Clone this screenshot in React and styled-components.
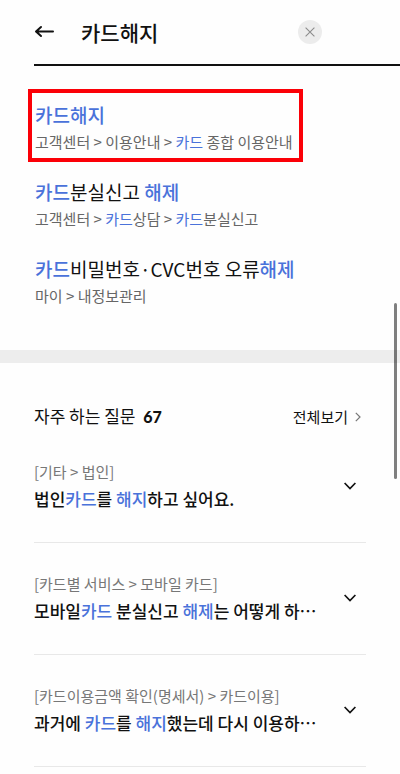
import React, { useState } from 'react'
import styled, { createGlobalStyle } from 'styled-components'

const menus = [
    { title: '*카드해지*', path: '고객센터 > 이용안내 > *카드* 종합 이용안내', marked: true },
    { title: '*카드*분실신고 *해제*', path: '고객센터 > *카드*상담 > *카드*분실신고' },
    { title: '*카드*비밀번호·CVC번호 오류*해제*', path: '마이 > 내정보관리' },
]

const questions = [
    { category: '[기타 > 법인]', title: '법인*카드*를 *해지*하고 싶어요.' },
    { category: '[카드별 서비스 > 모바일 카드]', title: '모바일*카드* 분실신고 *해제*는 어떻게 하⋯' },
    { category: '[카드이용금액 확인(명세서) > 카드이용]', title: '과거에 *카드*를 *해지*했는데 다시 이용하⋯' },
]

// words between asterisks are the matched keywords
function Keywords({ text }) {
    return text.split('*').map((part, index) => (
        index % 2 ? <Keyword key={index}>{part}</Keyword> : part
    ))
}

export default function App() {
    const [query, setQuery] = useState('카드해지')

    return <>
        <GlobalStyle />
        <SearchBar role="search" onSubmit={(e) => e.preventDefault()}>
            <BackButton type="button" aria-label="뒤로">
                <svg width="20" height="14" viewBox="0 0 20 14" fill="none" stroke="#111" strokeWidth="2" strokeLinecap="round" strokeLinejoin="round">
                    <path d="M19 6.5H2.5M7 2L2 6.5L7 11" />
                </svg>
            </BackButton>
            <SearchInput aria-label="검색어" value={query} onChange={(e) => setQuery(e.target.value)} />
            <ClearButton type="button" aria-label="지우기" onClick={() => setQuery('')}>
                <svg width="10" height="10" viewBox="0 0 10 10" fill="none" stroke="#8c8c8c" strokeWidth="1.1">
                    <path d="M0.6 0.6L9.4 9.4M9.4 0.6L0.6 9.4" />
                </svg>
            </ClearButton>
        </SearchBar>
        <main>
            <MenuList>
                {menus.map((menu) => (
                    <li key={menu.title}>
                        <MenuLink href="#" $marked={menu.marked}>
                            <MenuTitle><Keywords text={menu.title} /></MenuTitle>
                            <MenuPath><Keywords text={menu.path} /></MenuPath>
                        </MenuLink>
                    </li>
                ))}
            </MenuList>
            <Faq>
                <FaqHeader>
                    <FaqTitle>자주 하는 질문 <Count>67</Count></FaqTitle>
                    <MoreLink href="#">
                        전체보기
                        <svg width="6" height="10" viewBox="0 0 6 10" fill="none" stroke="#777" strokeWidth="1.2">
                            <path d="M0.8 0.8L5 5L0.8 9.2" />
                        </svg>
                    </MoreLink>
                </FaqHeader>
                <QuestionList>
                    {questions.map((question) => (
                        <Question key={question.title}>
                            <QuestionButton type="button" aria-expanded="false">
                                <QuestionText>
                                    <Category>{question.category}</Category>
                                    <QuestionTitle><Keywords text={question.title} /></QuestionTitle>
                                </QuestionText>
                                <svg width="12" height="8" viewBox="0 0 12 8" fill="none" stroke="#111" strokeWidth="1.7">
                                    <path d="M0.6 1L6 6.6L11.4 1" />
                                </svg>
                            </QuestionButton>
                        </Question>
                    ))}
                </QuestionList>
            </Faq>
        </main>
        <ScrollThumb />
    </>
}

const GlobalStyle = createGlobalStyle`
    *{
        box-sizing:border-box;
    }
    html{
        scrollbar-width:none;
    }
    body{
        margin:0;
        background-color:#fefefe;
        color:#111;
        font-family:"Noto Sans CJK KR", "Noto Sans", sans-serif;
    }
    button, input{
        padding:0;
        border:none;
        background:none;
        color:inherit;
        font-family:inherit;
    }
    button{
        cursor:pointer;
    }
    a{
        color:inherit;
        text-decoration:none;
    }
    h2, p, ul{
        margin:0;
        padding:0;
    }
    ul{
        list-style:none;
    }
    svg{
        display:block;
        flex:none;
    }
`

const SearchBar = styled.form`
    display:flex;
    align-items:center;
    height:66px;
    margin-left:34px;
    padding-right:78px;
    border-bottom:2px solid #111;
`

const BackButton = styled.button`
    margin-right:27px;
`

const SearchInput = styled.input`
    flex:1;
    min-width:0;
    height:32px;
    font-size:21px;
    font-weight:500;
    outline:none;
`

const ClearButton = styled.button`
    display:flex;
    align-items:center;
    justify-content:center;
    width:24px;
    height:24px;
    border-radius:50%;
    background-color:#ececec;
`

const Keyword = styled.span`
    color:#4a72da;
    font-weight:500;
`

const MenuList = styled.ul`
    display:flex;
    flex-direction:column;
    gap:23px;
    padding:35px 35px 41px;
    border-bottom:13px solid #ededed;
`

const MenuLink = styled.a`
    position:relative;
    display:inline-block;
    vertical-align:top;

    &::after{
        content:"";
        display:${({ $marked }) => ($marked ? 'block' : 'none')};
        position:absolute;
        inset:-12px -10px -7px -7px;
        border:4px solid #fb0007;
    }
`

const MenuTitle = styled.p`
    font-size:19px;
    line-height:28px;
`

const MenuPath = styled.p`
    color:#666;
    font-size:15px;
    line-height:26px;

    ${Keyword}{
        font-weight:400;
    }
`

const Faq = styled.section`
    padding:39px 34px 0;
`

const FaqHeader = styled.div`
    display:flex;
    align-items:center;
    justify-content:space-between;
    padding-right:5px;
`

const FaqTitle = styled.h2`
    font-size:17px;
    font-weight:400;
    line-height:28px;
`

const Count = styled.span`
    margin-left:4px;
    font-family:Lato, sans-serif;
    font-weight:900;
    font-size:16px;
`

const MoreLink = styled.a`
    display:flex;
    align-items:center;
    gap:7px;
    font-size:15px;
    line-height:28px;
`

const QuestionList = styled.ul`
    display:flex;
    flex-direction:column;
`

const Question = styled.li`
    border-bottom:1px solid #e8e8e8;
`

const QuestionButton = styled.button`
    display:flex;
    align-items:center;
    justify-content:space-between;
    width:100%;
    height:111px;
    padding:0 10px 2px 0;
    text-align:left;
`

const QuestionText = styled.span`
    display:flex;
    flex-direction:column;
    min-width:0;
`

const Category = styled.span`
    color:#777;
    font-size:15px;
    line-height:26px;
`

const QuestionTitle = styled.span`
    overflow:hidden;
    font-size:17px;
    font-weight:500;
    line-height:28px;
    text-overflow:ellipsis;
    white-space:nowrap;
`

const ScrollThumb = styled.div`
    position:fixed;
    top:303px;
    right:3px;
    width:3px;
    height:176px;
    border-radius:2px;
    background-color:rgba(0, 0, 0, 0.5);
`
